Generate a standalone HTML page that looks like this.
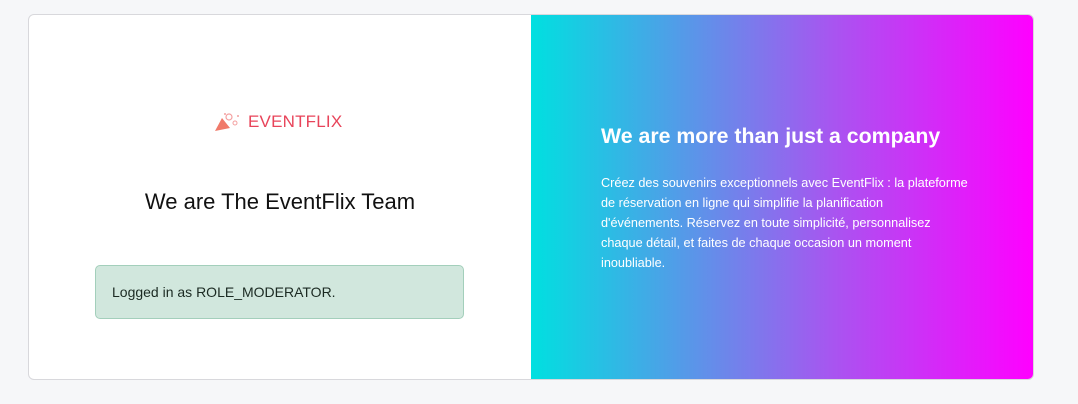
<!DOCTYPE html>
<html><head><meta charset="utf-8"><style>
body{margin:0;width:1078px;height:404px;background:#f6f7f9;font-family:"Liberation Sans",sans-serif;position:relative;overflow:hidden}
.card{position:absolute;left:28px;top:14px;width:1004px;height:364px;border:1px solid #d8d8dc;border-radius:6px;background:#fff;overflow:hidden}
.left{position:absolute;left:0;top:0;width:502px;height:364px}
.right{position:absolute;left:502px;top:0;width:503px;height:364px;background:linear-gradient(90deg,#00e0e0 0%,#a855f0 60%,#ff00ff 100%);color:#fff}
.logo{position:absolute;left:184px;top:96px;display:flex;align-items:center}
.logo span{color:#e8445a;font-size:17px;letter-spacing:.2px;margin-left:3px}
h1{position:absolute;left:0;width:502px;text-align:center;top:174px;margin:0;font-size:22px;font-weight:500;color:#111}
.alert{position:absolute;left:66px;top:250px;width:369px;background:#d1e7dd;border:1px solid #a3cfbb;border-radius:5px;font-size:14px;color:#1b2a22;line-height:52px;box-sizing:border-box;padding-left:16px;height:54px}
h2{position:absolute;left:70px;top:109px;margin:0;font-size:21.3px;font-weight:bold;white-space:nowrap}
p{position:absolute;left:70px;top:158px;margin:0;font-size:12.7px;line-height:20px;white-space:nowrap}
</style></head><body>
<div class="card">
<div class="left">
<div class="logo"><svg width="32" height="22" viewBox="0 0 32 22"><path d="M2 20 L9 7 L17 17 Z" fill="#f07a6a"/><circle cx="16" cy="6" r="3" fill="none" stroke="#f4a0a0" stroke-width="1.2"/><circle cx="22" cy="12" r="2" fill="none" stroke="#f4a0a0"/><circle cx="12" cy="3" r="1" fill="#f4a0a0"/><circle cx="25" cy="5" r="1" fill="#f4a0a0"/></svg><span>EVENTFLIX</span></div>
<h1>We are The EventFlix Team</h1>
<div class="alert">Logged in as ROLE_MODERATOR.</div>
</div>
<div class="right">
<h2>We are more than just a company</h2>
<p>Créez des souvenirs exceptionnels avec EventFlix : la plateforme<br>de réservation en ligne qui simplifie la planification<br>d'événements. Réservez en toute simplicité, personnalisez<br>chaque détail, et faites de chaque occasion un moment<br>inoubliable.</p>
</div>
</div>
</body></html>
